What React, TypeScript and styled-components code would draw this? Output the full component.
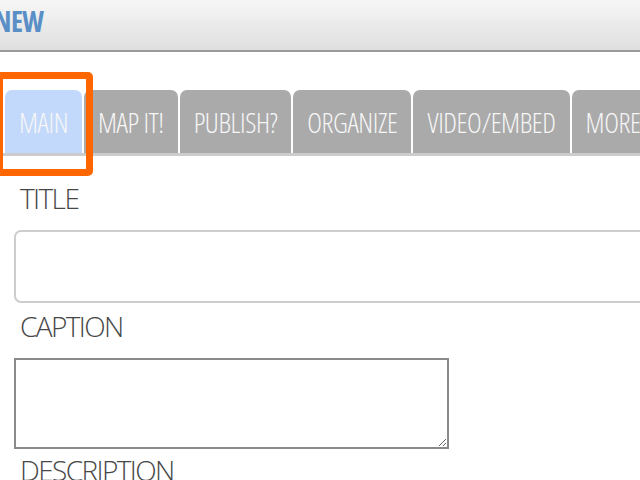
import React from "react";
import styled, { createGlobalStyle } from "styled-components";

const Global = createGlobalStyle`
  html, body { margin: 0; padding: 0; background: #ffffff; overflow: hidden; }
  body { font-family: "Open Sans", "Liberation Sans Narrow", "DejaVu Sans", sans-serif; }
  * { box-sizing: border-box; }
`;

const Page = styled.div`
  position: relative;
  width: 640px;
  height: 480px;
  overflow: hidden;
`;

const Header = styled.header`
  height: 52px;
  background: linear-gradient(#f6f6f6, #dfdfdf);
  border-bottom: 2px solid #9a9a9a;
  display: flex;
  align-items: center;
`;

const HeaderTitle = styled.h1`
  margin: 0 0 0 -6px;
  font-size: 28px;
  font-weight: 700;
  font-stretch: 75%;
  letter-spacing: -0.5px;
  color: #5a8ec6;
  line-height: 1;
  padding-bottom: 8px;
`;

const TabBar = styled.nav`
  margin-top: 38px;
  padding-left: 5px;
  display: flex;
  gap: 2px;
  border-bottom: 3px solid #cccccc;
  overflow: hidden;
`;

const Tab = styled.div<{ $active?: boolean }>`
  flex-shrink: 0;
  height: 63px;
  padding: 0 14px;
  display: flex;
  align-items: center;
  border-radius: 7px 7px 0 0;
  background: ${(p) => (p.$active ? "#c2d9fb" : "#aaaaaa")};
  color: #f6f6f6;
  font-size: 28px;
  font-weight: 300;
  font-stretch: 75%;
  letter-spacing: -0.4px;
  white-space: nowrap;
`;

const Highlight = styled.div`
  position: absolute;
  left: -4px;
  top: 72px;
  width: 97px;
  height: 104px;
  border: 7px solid #ff6600;
  border-radius: 5px;
  pointer-events: none;
`;

const Form = styled.form`
  padding-left: 14px;
  padding-top: 26px;
`;

const Label = styled.label<{ $gap?: number }>`
  display: block;
  padding-left: 6px;
  margin-top: ${(p) => p.$gap ?? 0}px;
  font-size: 28px;
  font-weight: 300;
  font-stretch: 88%;
  letter-spacing: -1.6px;
  line-height: 32px;
  color: #474747;
`;

const TextInput = styled.input`
  display: block;
  margin-top: 16px;
  width: 680px;
  height: 73px;
  border: 2px solid #cdcdcd;
  border-radius: 7px;
  background: #ffffff;
  outline: none;
`;

const TextArea = styled.textarea`
  display: block;
  margin-top: 16px;
  width: 435px;
  height: 91px;
  border: 2px solid #8a8a8a;
  border-radius: 0;
  background: #ffffff;
  outline: none;
`;

const tabs = ["MAIN", "MAP IT!", "PUBLISH?", "ORGANIZE", "VIDEO/EMBED", "MORE"];

export default function App() {
  return (
    <Page>
      <Global />
      <Header>
        <HeaderTitle>NEW</HeaderTitle>
      </Header>
      <TabBar>
        {tabs.map((t, i) => (
          <Tab key={t} $active={i === 0}>
            {t}
          </Tab>
        ))}
      </TabBar>
      <Form>
        <Label>TITLE</Label>
        <TextInput type="text" />
        <Label $gap={7}>CAPTION</Label>
        <TextArea />
        <Label $gap={5}>DESCRIPTION</Label>
      </Form>
      <Highlight />
    </Page>
  );
}
